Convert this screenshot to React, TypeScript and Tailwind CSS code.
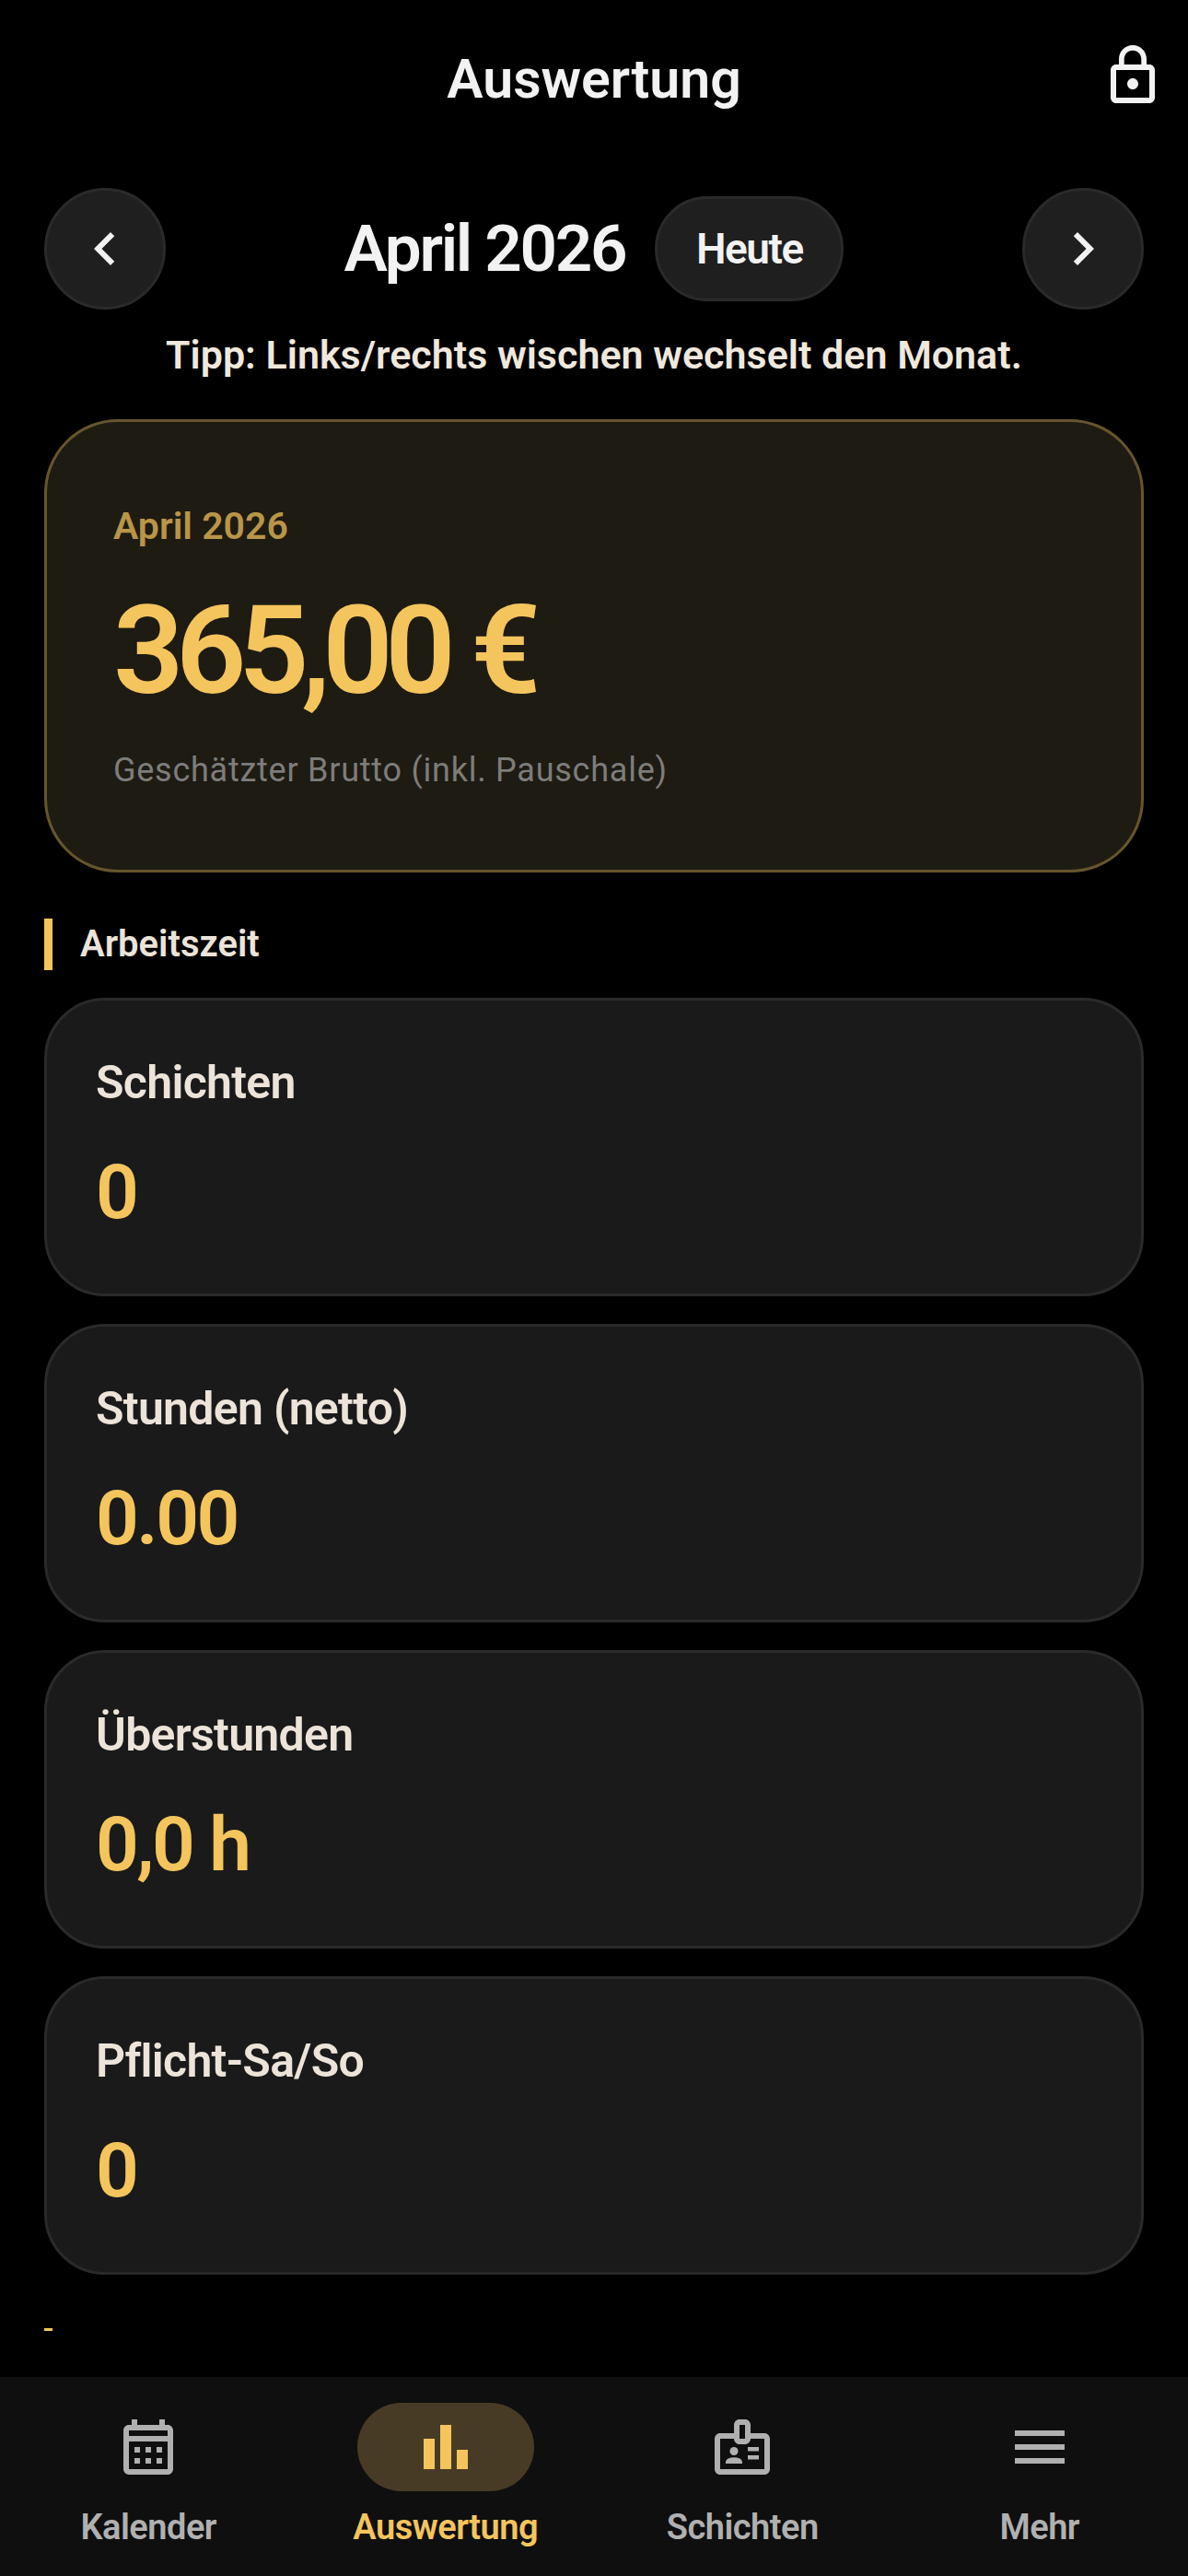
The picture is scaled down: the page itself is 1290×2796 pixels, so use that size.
import { MdBarChart, MdChevronLeft, MdChevronRight, MdLockOutline, MdMenu, MdOutlineBadge, MdOutlineCalendarMonth } from "react-icons/md";

const stats = [
  { label: "Schichten", value: "0" },
  { label: "Stunden (netto)", value: "0.00" },
  { label: "Überstunden", value: "0,0 h" },
  { label: "Pflicht-Sa/So", value: "0" },
];

const tabs = [
  { label: "Kalender", Icon: MdOutlineCalendarMonth },
  { label: "Auswertung", Icon: MdBarChart, active: true },
  { label: "Schichten", Icon: MdOutlineBadge },
  { label: "Mehr", Icon: MdMenu },
];

const StatCard = ({ label, value }: { label: string; value: string }) => (
  <div className="h-[324px] rounded-[66px] border-[3px] border-[#2a2a2a] bg-[#1a1a1a] px-[53px] pt-[58px]">
    <div className="text-[50px] leading-[62px] font-semibold tracking-[-0.7px] text-[#ece4d9]">{label}</div>
    <div className="mt-[38px] text-[82px] leading-[100px] font-semibold tracking-[-2.5px] text-[#f4c55c]">{value}</div>
  </div>
);

const App = () => {
  return (
    <div className="flex h-[2796px] w-[1290px] flex-col overflow-hidden bg-black font-['Roboto',sans-serif]">
      <div className="flex-1 px-[48px]">
        <header className="relative flex h-[172px] items-center justify-center">
          <h1 className="text-[59px] font-semibold text-[#f2f2f2]">Auswertung</h1>
          <MdLockOutline className="absolute right-[-24px] top-[46px] text-[#f2f2f2]" size={72} />
        </header>

        <div className="mt-[32px] flex items-center justify-between">
          <button className="flex h-[132px] w-[132px] items-center justify-center rounded-full border-[3px] border-[#2a2a2a] bg-[#1f1f1f] text-[#f2f2f2]">
            <MdChevronLeft size={72} />
          </button>
          <div className="flex items-center gap-[32px]">
            <span className="text-[71px] font-semibold tracking-[-2.3px] text-[#f2f2f2]">April 2026</span>
            <span className="flex h-[114px] w-[205px] items-center justify-center rounded-full border-[3px] border-[#2a2a2a] bg-[#1f1f1f] text-[46px] font-semibold tracking-[-1.5px] text-[#f2f2f2]">
              Heute
            </span>
          </div>
          <button className="flex h-[132px] w-[132px] items-center justify-center rounded-full border-[3px] border-[#2a2a2a] bg-[#1f1f1f] text-[#f2f2f2]">
            <MdChevronRight size={72} />
          </button>
        </div>

        <p className="mt-[22px] text-center text-[43px] leading-[54px] font-semibold text-[#f0e8dc]">
          Tipp: Links/rechts wischen wechselt den Monat.
        </p>

        <section className="mt-[43px] h-[492px] rounded-[80px] border-[3px] border-[#66552c] bg-[#1e1b13] pl-[72px] pt-[86px]">
          <div className="text-[41px] leading-[54px] font-semibold text-[#b99548]">April 2026</div>
          <div className="mt-[36px] text-[134px] leading-[146px] font-semibold tracking-[-8.5px] text-[#f4c55c]">365,00 €</div>
          <div className="mt-[31px] text-[36px] leading-[50px] tracking-[0.75px] text-[#7d7d7a]">Geschätzter Brutto (inkl. Pauschale)</div>
        </section>

        <div className="mt-[50px] flex h-[56px] items-center border-l-[9px] border-[#f4c55c] pl-[30px]">
          <span className="text-[40px] font-semibold text-[#ece4d9]">Arbeitszeit</span>
        </div>

        <div className="mt-[30px] flex flex-col gap-[30px]">
          {stats.map((stat) => (
            <StatCard key={stat.label} {...stat} />
          ))}
        </div>

        <div className="mt-[58px] h-[3px] w-[9px] bg-[#f4c55c]" />
      </div>

      <nav className="grid h-[216px] shrink-0 grid-cols-4 bg-[#0f0f0f] px-0">
        {tabs.map(({ label, Icon, active }) => (
          <div key={label} className="flex flex-col items-center pt-[28px]">
            <div className={`flex h-[96px] w-[192px] items-center justify-center rounded-full ${active ? "bg-[#483b26] text-[#f4c55c]" : "text-[#b0b0b0]"}`}>
              <Icon size={72} />
            </div>
            <span className={`mt-[15px] text-[38px] leading-[48px] font-semibold tracking-[-0.5px] ${active ? "text-[#f4c55c]" : "text-[#b0b0b0]"}`}>{label}</span>
          </div>
        ))}
      </nav>
    </div>
  );
};

export default App;
